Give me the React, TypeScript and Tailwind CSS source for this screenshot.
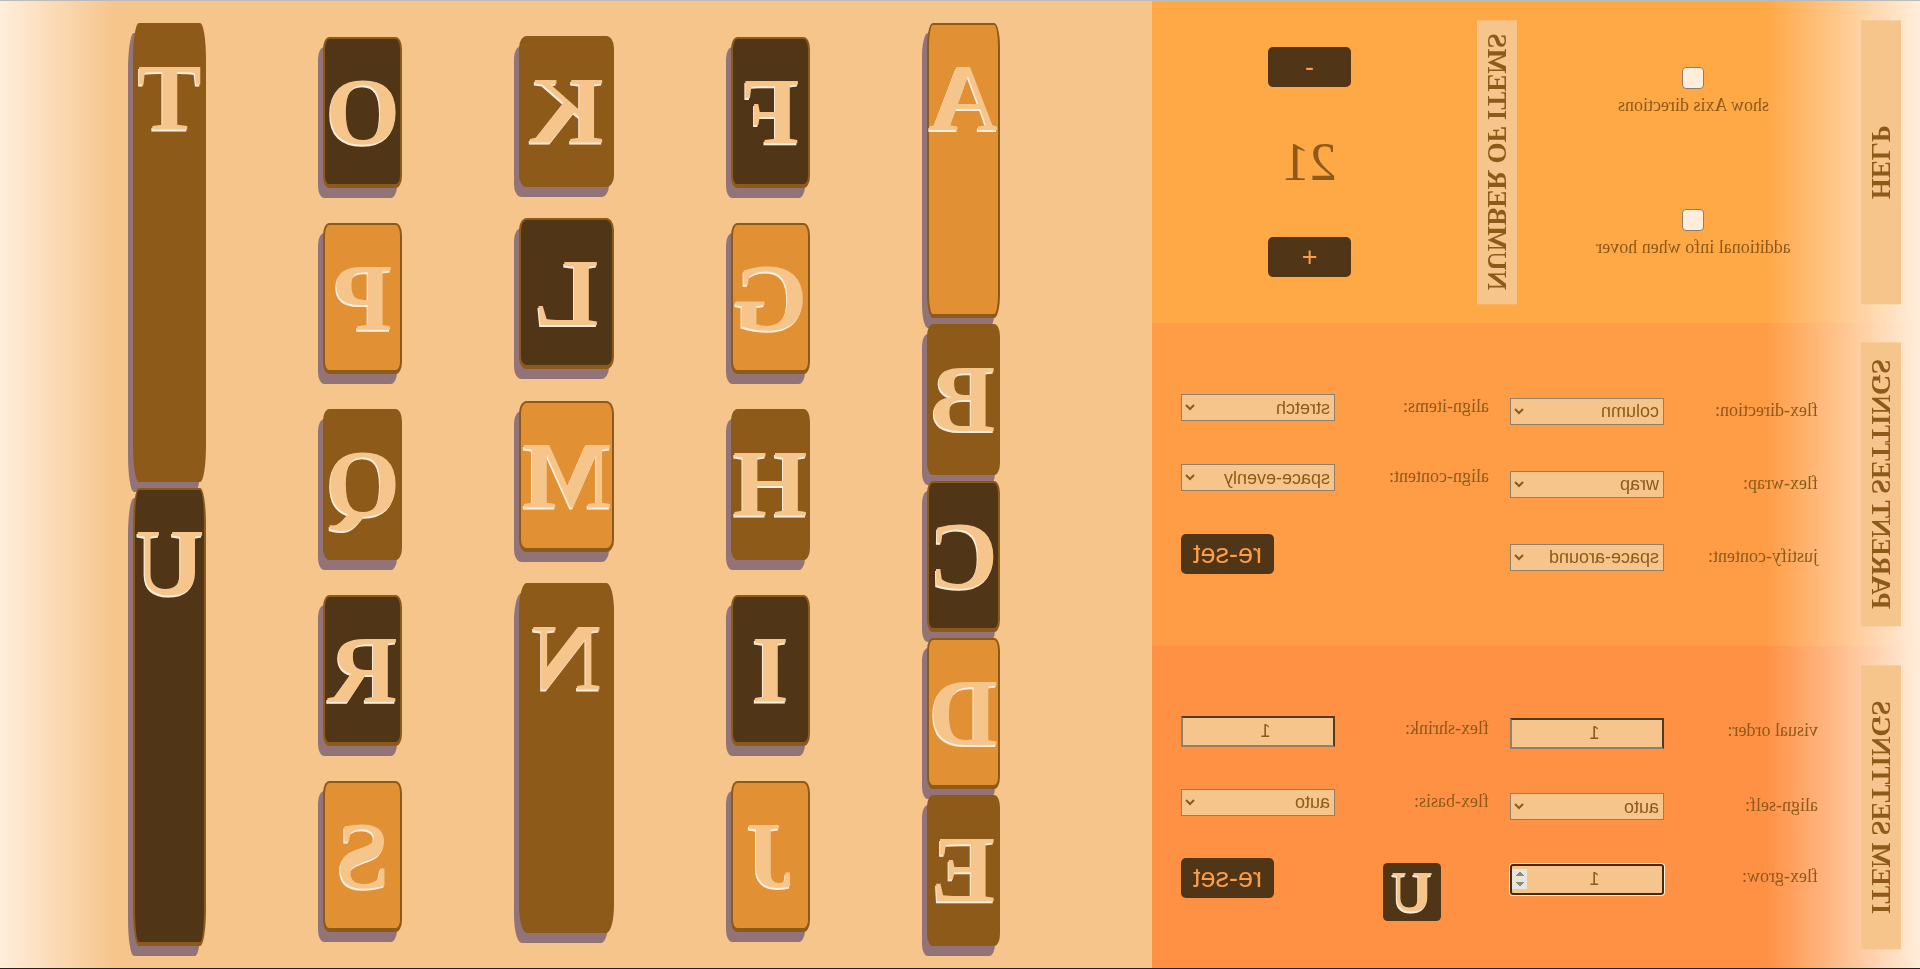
import React, { useState } from "react";

type Tone = "orange" | "brown" | "dark";

const TONES: Tone[] = ["orange", "brown", "dark"];

const TONE_CLASS: Record<Tone, string> = {
  orange: "bg-[#e19133]",
  brown: "bg-[#8d5a19]",
  dark: "bg-[#503616]",
};

const COLUMNS: string[][] = [
  ["A", "B", "C", "D", "E"],
  ["F", "G", "H", "I", "J"],
  ["K", "L", "M", "N"],
  ["O", "P", "Q", "R", "S"],
  ["T", "U"],
];

const GROWING = ["A", "T", "U"];

function toneOf(letter: string): Tone {
  return TONES[(letter.charCodeAt(0) - 65) % 3];
}

function Tile({ letter }: { letter: string }) {
  const grow = GROWING.includes(letter) ? "grow" : "";
  const tall = letter === "N" ? "min-h-[350px]" : "";
  return (
    <div
      className={`m-[3px] rounded-[8%] border-2 border-b-4 border-[#8d5a19] pt-[18px] pb-[18px] text-center text-[96px] leading-[109px] font-bold text-[#f6c58b] shadow-[5px_10px_0_#927478] [text-shadow:1px_2px_0_#ffeedc] ${TONE_CLASS[toneOf(letter)]} ${grow} ${tall}`}
    >
      {letter}
    </div>
  );
}

function Heading({ children }: { children: React.ReactNode }) {
  return (
    <h2 className="flex w-10 shrink-0 rotate-180 items-center justify-center bg-[#f6c58b] text-[27px] leading-10 font-bold whitespace-nowrap [writing-mode:vertical-rl]">
      {children}
    </h2>
  );
}

function Check({ id, label }: { id: string; label: string }) {
  return (
    <div className="flex flex-col items-center gap-1.5">
      <input
        id={id}
        type="checkbox"
        className="size-[22px] appearance-none rounded-[4px] border border-[#8f7d68] bg-[#ffeddb] checked:bg-[#8d5a19]"
      />
      <label htmlFor={id}>{label}</label>
    </div>
  );
}

function Row({ id, label, children }: { id: string; label: string; children: React.ReactNode }) {
  return (
    <div className="flex items-start">
      <label htmlFor={id} className="w-1/2 pt-0.5">
        {label}
      </label>
      <div className="flex w-1/2">{children}</div>
    </div>
  );
}

function SelectRow({ id, label, options }: { id: string; label: string; options: string[] }) {
  return (
    <Row id={id} label={label}>
      <select
        id={id}
        className="h-[27px] w-full border border-[#8f7f6b] bg-[#f6c58b] font-['Liberation_Sans',sans-serif] text-[18px] text-[#8d5a19]"
      >
        {options.map((o) => (
          <option key={o}>{o}</option>
        ))}
      </select>
    </Row>
  );
}

function NumberRow({ id, label, active }: { id: string; label: string; active?: boolean }) {
  const look = active
    ? "rounded-[3px] border-[#3f2c12] ring-1 ring-[#ffeedc] [&::-webkit-inner-spin-button]:opacity-100 [&::-webkit-inner-spin-button]:[filter:sepia(0.4)_brightness(0.9)]"
    : "border-t-[#4d3b23] border-r-[#8f7f6b] border-b-[#8f7f6b] border-l-[#4d3b23]";
  return (
    <Row id={id} label={label}>
      <input
        id={id}
        type="number"
        defaultValue={1}
        className={`h-[31px] w-full border-2 bg-[#f6c58b] text-center font-['Liberation_Sans',sans-serif] text-[18px] text-[#8d5a19] outline-none ${look}`}
      />
    </Row>
  );
}

const BUTTON =
  "h-10 rounded-[5px] bg-[#503616] font-['Liberation_Sans',sans-serif] text-[27px] leading-10 text-[#ff9d46]";

export default function App() {
  const [count, setCount] = useState(21);
  return (
    <div className="flex min-h-screen -scale-x-100 border-t border-b border-t-[#bbbbbb] border-b-[#222222] bg-[#ffeedc] font-['Liberation_Serif',serif] text-[18px] leading-[21px] text-[#8d5a19]">
      <aside className="grid w-2/5 grid-rows-3">
        <section className="flex bg-[linear-gradient(to_right,#ffeedc,#ffa846_20%)]">
          <div className="flex w-1/2 py-[19px] pl-[19px]">
            <Heading>HELP</Heading>
            <div className="flex flex-1 flex-col justify-around pl-2.5">
              <Check id="axis" label="show Axis directions" />
              <Check id="hover" label="additional info when hover" />
            </div>
          </div>
          <div className="flex w-1/2 py-[19px] pl-[19px]">
            <Heading>NUMBER OF ITEMS</Heading>
            <div className="flex flex-1 flex-col items-center pl-2.5">
              <div className="flex flex-1 items-center">
                <button type="button" className={`w-[83px] ${BUTTON}`} onClick={() => setCount(count - 1)}>
                  -
                </button>
              </div>
              <div className="flex flex-1 items-center">
                <output className="text-[54px] leading-10">{count}</output>
              </div>
              <div className="flex flex-1 items-center">
                <button type="button" className={`w-[83px] ${BUTTON}`} onClick={() => setCount(count + 1)}>
                  +
                </button>
              </div>
            </div>
          </div>
        </section>

        <section className="flex bg-[linear-gradient(to_right,#ffeedc,#ff9d46_20%)] py-[19px] pl-[19px]">
          <Heading>PARENT SETTINGS</Heading>
          <form className="flex flex-1 items-center gap-[21px] pr-[29px] pl-[43px]">
            <div className="flex flex-1 flex-col gap-[46px]">
              <SelectRow id="direction" label="flex-direction:" options={["column", "row"]} />
              <SelectRow id="wrap" label="flex-wrap:" options={["wrap", "nowrap"]} />
              <SelectRow id="justify" label="justify-content:" options={["space-around", "center"]} />
            </div>
            <div className="flex flex-1 flex-col gap-[43px]">
              <SelectRow id="items" label="align-items:" options={["stretch", "center"]} />
              <SelectRow id="content" label="align-content:" options={["space-evenly", "center"]} />
              <div className="flex justify-end">
                <button type="reset" className={`w-[93px] ${BUTTON}`}>
                  re-set
                </button>
              </div>
            </div>
          </form>
        </section>

        <section className="flex bg-[linear-gradient(to_right,#ffeedc,#ff9145_20%)] py-[19px] pl-[19px]">
          <Heading>ITEM SETTINGS</Heading>
          <form className="flex flex-1 items-center gap-[21px] pr-[29px] pl-[43px]">
            <div className="flex flex-1 flex-col gap-11">
              <NumberRow id="order" label="visual order:" />
              <SelectRow id="self" label="align-self:" options={["auto", "center"]} />
              <NumberRow id="grow" label="flex-grow:" active />
            </div>
            <div className="flex flex-1 flex-col gap-[42px]">
              <NumberRow id="shrink" label="flex-shrink:" />
              <SelectRow id="basis" label="flex-basis:" options={["auto", "content"]} />
              <div className="flex h-10 items-start">
                <div className="flex w-1/2 justify-center pt-[5px]">
                  <div className="size-[58px] rounded-[8%] bg-[#503616] text-center text-[58px] leading-[58px] font-bold text-[#f6c58b] [text-shadow:1px_2px_0_#ffeedc]">
                    U
                  </div>
                </div>
                <div className="flex w-1/2 justify-end">
                  <button type="reset" className={`w-[93px] ${BUTTON}`}>
                    re-set
                  </button>
                </div>
              </div>
            </div>
          </form>
        </section>
      </aside>

      <main className="flex w-3/5 justify-evenly bg-[linear-gradient(to_left,#ffeedc,#f6c58b_10%)] py-[19px] pr-[19px] pl-[38px]">
        {COLUMNS.map((column) => (
          <div key={column[0]} className="flex flex-col justify-around">
            {column.map((letter) => (
              <Tile key={letter} letter={letter} />
            ))}
          </div>
        ))}
      </main>
    </div>
  );
}
